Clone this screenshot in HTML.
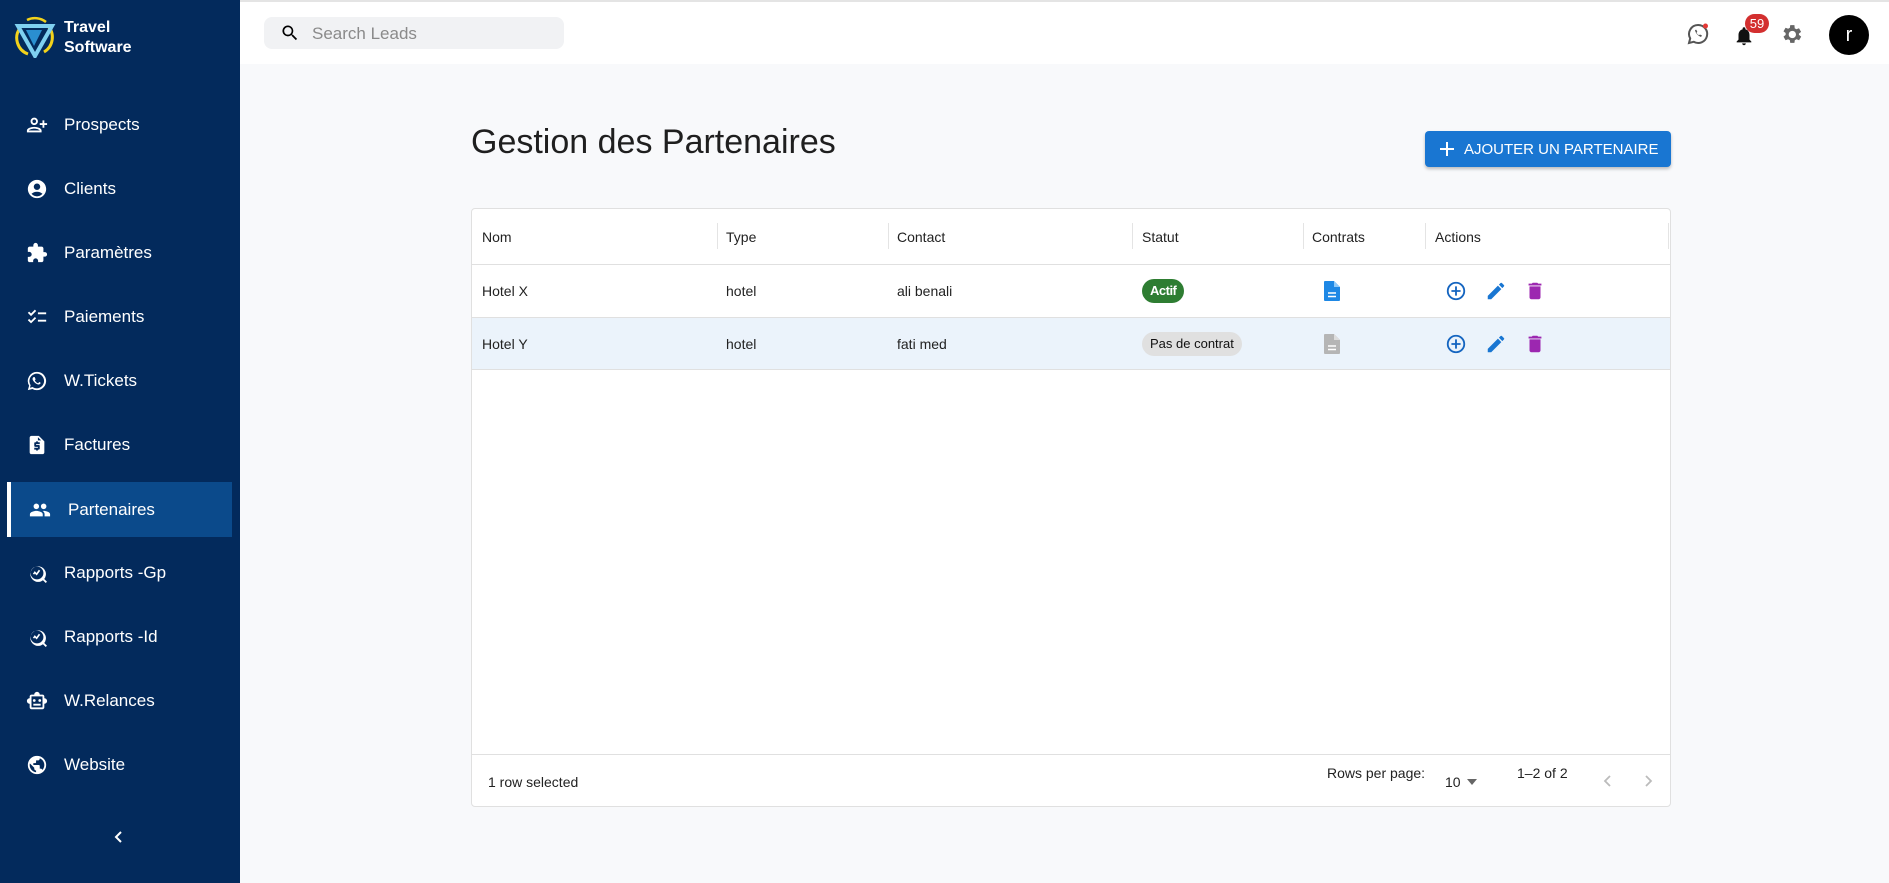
<!DOCTYPE html>
<html><head><meta charset="utf-8"><style>
*{box-sizing:border-box;margin:0;padding:0}
body{width:1889px;height:883px;overflow:hidden;font-family:"Liberation Sans",Arial,sans-serif;background:#f8f9fb;position:relative}
.side{position:absolute;left:0;top:0;width:240px;height:883px;background:#032a5c;color:#fff}
.logo{position:absolute;left:14px;top:16px}
.brand{position:absolute;left:64px;top:18px;font-weight:bold;font-size:16px;line-height:20px}
.item{position:absolute;left:0;width:240px;height:40px;display:flex;align-items:center;font-size:17px}
.item svg{position:absolute;left:26px;width:22px;height:22px;fill:#fff}
.item span{position:absolute;left:64px}
.active{left:7px;width:225px;height:55px;background:#0b4a8b;border-left:4px solid #fff}
.active svg{left:18px}.active span{left:57px}
.top{position:absolute;left:240px;top:0;right:0;height:64px;background:#fff;border-top:2px solid #e4e4e4}
.search{position:absolute;left:24px;top:15px;width:300px;height:32px;background:#f1f2f4;border-radius:8px}
.search span{position:absolute;left:48px;top:7px;font-size:17px;color:#8a8a8a}
h1{position:absolute;left:471px;top:123px;font-size:34px;font-weight:normal;color:#1f1f1f}
.btn{position:absolute;left:1425px;top:131px;width:246px;height:36px;background:#1976d2;border-radius:4px;color:#fff;font-size:15px;box-shadow:0 2px 3px rgba(0,0,0,.25);display:flex;align-items:center}
.tbl{position:absolute;left:471px;top:208px;width:1200px;height:599px;background:#fff;border:1px solid #e0e0e0;border-radius:4px;font-size:14px;color:#222}
.row{position:absolute;left:0;width:1198px;border-bottom:1px solid #e0e0e0}
.c{position:absolute;top:50%;transform:translateY(-50%)}
.sep{position:absolute;top:14px;height:26px;width:1px;background:#e4e4e4}
.chip{position:absolute;top:50%;transform:translateY(-50%);height:24px;border-radius:12px;padding:0 8px;line-height:24px;font-size:13px}
.ic{position:absolute;top:50%;transform:translateY(-50%)}
</style></head><body>
<div class="side">
<svg class="logo" width="42" height="42" viewBox="0 0 42 42"><path d="M6 12 A17 17 0 0 0 14 38" stroke="#f2d21b" stroke-width="3" fill="none"/><path d="M34 10 A17 17 0 0 1 30 36" stroke="#f2d21b" stroke-width="3" fill="none"/><path d="M13 4 A18 18 0 0 1 32 6" stroke="#f2d21b" stroke-width="2.5" fill="none"/><path d="M4 10 L38 10 L21 40 Z" fill="none" stroke="#7fd0f0" stroke-width="4"/><path d="M12 14 L28 14 L20 30 Z" fill="#2a8fd0"/></svg>
<div class="brand">Travel<br>Software</div>
<div class="item" style="top:105px"><svg viewBox="0 0 24 24"><path d="M15 12c2.2 0 4-1.8 4-4s-1.8-4-4-4-4 1.8-4 4 1.8 4 4 4zm0-6c1.1 0 2 .9 2 2s-.9 2-2 2-2-.9-2-2 .9-2 2-2zm0 8c-2.7 0-8 1.3-8 4v2h16v-2c0-2.7-5.3-4-8-4zm-6 4c.2-.7 3.3-2 6-2s5.8 1.3 6 2H9zM6 15v-3h3v-2H6V7H4v3H1v2h3v3z" transform="scale(-1,1) translate(-24,0)"/></svg><span>Prospects</span></div>
<div class="item" style="top:169px"><svg viewBox="0 0 24 24"><path d="M12 2C6.5 2 2 6.5 2 12s4.5 10 10 10 10-4.5 10-10S17.5 2 12 2zm0 4c1.9 0 3.5 1.6 3.5 3.5S13.9 13 12 13s-3.5-1.6-3.5-3.5S10.1 6 12 6zm0 14c-2 0-4.4-.8-6-2.8 1.6-1.3 3.7-2.2 6-2.2s4.4.9 6 2.2c-1.6 2-4 2.8-6 2.8z"/></svg><span>Clients</span></div>
<div class="item" style="top:233px"><svg viewBox="0 0 24 24"><path d="M20.5 11H19V7c0-1.1-.9-2-2-2h-4V3.5a2.5 2.5 0 0 0-5 0V5H4c-1.1 0-2 .9-2 2v3.8h1.5c1.5 0 2.7 1.2 2.7 2.7S5 16.2 3.5 16.2H2V20c0 1.1.9 2 2 2h3.8v-1.5c0-1.5 1.2-2.7 2.7-2.7s2.7 1.2 2.7 2.7V22H17c1.1 0 2-.9 2-2v-4h1.5a2.5 2.5 0 0 0 0-5z"/></svg><span>Paramètres</span></div>
<div class="item" style="top:297px"><svg viewBox="0 0 24 24"><path d="M22 7h-9v2h9V7zm0 8h-9v2h9v-2zM5.5 11 2 7.5l1.4-1.4 2.1 2.1 4.2-4.2 1.4 1.4-5.6 5.6zm0 8L2 15.5l1.4-1.4 2.1 2.1 4.2-4.2 1.4 1.4-5.6 5.6z"/></svg><span>Paiements</span></div>
<div class="item" style="top:361px"><svg viewBox="0 0 24 24"><path d="M12 2a10 10 0 0 0-8.6 15.1L2 22l5-1.3A10 10 0 1 0 12 2zm0 18c-1.6 0-3.1-.4-4.4-1.2l-.3-.2-3 .8.8-2.9-.2-.3A8 8 0 1 1 12 20zm4.4-6c-.2-.1-1.4-.7-1.7-.8-.2-.1-.4-.1-.5.1l-.8 1c-.1.2-.3.2-.5.1a6.5 6.5 0 0 1-3.2-2.8c-.2-.4.2-.4.7-1.3.1-.2 0-.3 0-.4l-.8-1.8c-.2-.5-.4-.4-.5-.4h-.5c-.2 0-.5.1-.7.3-.8.8-1 2-.4 3.1.8 1.5 2.3 3.5 4.900 4.4 1.5.5 2.4.3 3-.3.4-.4.5-.9.4-1.100-.1-.2-.2-.2-.4-.3z"/></svg><span>W.Tickets</span></div>
<div class="item" style="top:425px"><svg viewBox="0 0 24 24"><path d="M14 2H6c-1.1 0-2 .9-2 2v16c0 1.1.9 2 2 2h12c1.1 0 2-.9 2-2V8l-6-6zm1 9h-4v1h3c.6 0 1 .4 1 1v3c0 .6-.4 1-1 1h-1v1h-2v-1H9v-2h4v-1h-3c-.6 0-1-.4-1-1v-3c0-.6.4-1 1-1h1V8h2v1h2v2zm-2-4V3.5L16.5 7H13z"/></svg><span>Factures</span></div>
<div class="item active" style="top:482px"><svg viewBox="0 0 24 24"><path d="M16 11c1.7 0 3-1.3 3-3s-1.3-3-3-3-3 1.3-3 3 1.3 3 3 3zm-8 0c1.7 0 3-1.3 3-3S9.7 5 8 5 5 6.3 5 8s1.3 3 3 3zm0 2c-2.3 0-7 1.2-7 3.5V19h14v-2.5c0-2.3-4.7-3.5-7-3.5zm8 0c-.3 0-.6 0-1 .1 1.2.8 2 2 2 3.4V19h6v-2.5c0-2.3-4.7-3.5-7-3.5z"/></svg><span>Partenaires</span></div>
<div class="item" style="top:553px"><svg viewBox="0 0 24 24"><path d="M19.9 18.5A8.5 8.5 0 1 0 18.5 19.9l3 3 1.4-1.4-3-3zM12 19a7 7 0 1 1 0-14 7 7 0 0 1 0 14zm-4.5-6 2-3 2 2 2.5-3.5 1.5 1-3.8 5.2-2-2-.7 1-1.5-.7z"/></svg><span>Rapports -Gp</span></div>
<div class="item" style="top:617px"><svg viewBox="0 0 24 24"><path d="M19.9 18.5A8.5 8.5 0 1 0 18.5 19.9l3 3 1.4-1.4-3-3zM12 19a7 7 0 1 1 0-14 7 7 0 0 1 0 14zm-4.5-6 2-3 2 2 2.5-3.5 1.5 1-3.8 5.2-2-2-.7 1-1.5-.7z"/></svg><span>Rapports -Id</span></div>
<div class="item" style="top:681px"><svg viewBox="0 0 24 24"><path d="M20 9V7c0-1.1-.9-2-2-2h-3c0-1.7-1.3-3-3-3S9 3.3 9 5H6c-1.1 0-2 .9-2 2v2c-1.7 0-3 1.3-3 3s1.3 3 3 3v4c0 1.1.9 2 2 2h12c1.1 0 2-.9 2-2v-4c1.7 0 3-1.3 3-3s-1.3-3-3-3zm-2 10H6V7h12v12zm-9-6a1.5 1.5 0 1 0 0-3 1.5 1.5 0 0 0 0 3zm6 0a1.5 1.5 0 1 0 0-3 1.5 1.5 0 0 0 0 3zm-7 2h8v2H8z"/></svg><span>W.Relances</span></div>
<div class="item" style="top:745px"><svg viewBox="0 0 24 24"><path d="M12 2a10 10 0 1 0 0 20 10 10 0 0 0 0-20zm-1 17.9A8 8 0 0 1 4 12c0-.6.1-1.2.2-1.8L9 15v1c0 1.1.9 2 2 2v1.9zm6.9-2.5c-.3-.8-1-1.4-1.9-1.4h-1v-3c0-.6-.4-1-1-1H8v-2h2c.6 0 1-.4 1-1V7h2c1.1 0 2-.9 2-2v-.4a8 8 0 0 1 2.9 12.8z"/></svg><span>Website</span></div>
<svg style="position:absolute;left:113px;top:830px" width="12" height="14" viewBox="0 0 12 14"><path d="M8 2 3 7l5 5" stroke="#fff" stroke-width="2" fill="none"/></svg>
</div>
<div class="top">
<div class="search"><svg style="position:absolute;left:16px;top:6px" width="20" height="20" viewBox="0 0 24 24"><path d="M15.5 14h-.8l-.3-.3A6.5 6.5 0 1 0 9.5 16a6.5 6.5 0 0 0 4.2-1.6l.3.3v.8l5 5 1.5-1.5-5-5zm-6 0a4.5 4.5 0 1 1 0-9 4.5 4.5 0 0 1 0 9z"/></svg><span>Search Leads</span></div>
<svg style="position:absolute;left:1446px;top:20px" width="24" height="24" viewBox="0 0 24 24"><path d="M12 3a9 9 0 0 0-7.8 13.4L3 21l4.7-1.2A9 9 0 1 0 12 3z" stroke="#555" stroke-width="2" fill="none"/><path d="M9 8c.5 3 2.5 5.5 6 7l1-1.5-2-1-1 .8c-1-.5-2-1.5-2.5-2.5l.8-1-1-2z" fill="#555"/><circle cx="19.5" cy="4" r="2.5" fill="#e53935"/></svg>
<svg style="position:absolute;left:1493px;top:22px" width="22" height="24" viewBox="0 0 24 24"><path d="M12 22c1.1 0 2-.9 2-2h-4c0 1.1.9 2 2 2zm6-6v-5c0-3.1-1.6-5.6-4.5-6.3V4a1.5 1.5 0 0 0-3 0v.7C7.6 5.4 6 7.9 6 11v5l-2 2v1h16v-1l-2-2z" fill="#111"/></svg>
<div style="position:absolute;left:1505px;top:12px;width:24px;height:19px;border-radius:10px;background:#d32f2f;color:#fff;font-size:13px;text-align:center;line-height:19px">59</div>
<svg style="position:absolute;left:1539px;top:20px" width="25" height="25" viewBox="0 0 24 24"><path fill="#666" d="M19.1 12.9a7 7 0 0 0 0-1.8l2.1-1.6-2-3.5-2.5 1a7 7 0 0 0-1.6-.9L14.8 3h-4l-.4 2.6c-.6.2-1.1.5-1.6.9l-2.5-1-2 3.5 2.1 1.6a7 7 0 0 0 0 1.8l-2.1 1.6 2 3.5 2.5-1c.5.4 1 .7 1.6.9l.4 2.6h4l.4-2.6c.6-.2 1.1-.5 1.6-.9l2.5 1 2-3.5-2.1-1.6zM12.8 15.5a3.5 3.5 0 1 1 0-7 3.5 3.5 0 0 1 0 7z"/></svg>
<div style="position:absolute;left:1589px;top:13px;width:40px;height:40px;border-radius:50%;background:#000;color:#fff;font-size:20px;text-align:center;line-height:40px">r</div>
</div>
<h1>Gestion des Partenaires</h1>
<div class="btn"><svg style="position:absolute;left:15px;top:11px" width="14" height="14" viewBox="0 0 14 14"><path d="M7 0v14M0 7h14" stroke="#fff" stroke-width="2"/></svg><span style="position:absolute;left:39px">AJOUTER UN PARTENAIRE</span></div>
<div class="tbl">
<div class="row" style="top:0;height:56px">
<span class="c" style="left:10px">Nom</span><span class="c" style="left:254px">Type</span><span class="c" style="left:425px">Contact</span><span class="c" style="left:670px">Statut</span><span class="c" style="left:840px">Contrats</span><span class="c" style="left:963px">Actions</span>
<div class="sep" style="left:245px"></div><div class="sep" style="left:416px"></div><div class="sep" style="left:660px"></div><div class="sep" style="left:831px"></div><div class="sep" style="left:953px"></div><div class="sep" style="left:1196px"></div>
</div>
<div class="row" style="top:56px;height:53px">
<span class="c" style="left:10px">Hotel X</span><span class="c" style="left:254px">hotel</span><span class="c" style="left:425px">ali benali</span>
<span class="chip" style="left:670px;background:#2e7d32;color:#fff;font-weight:bold;letter-spacing:-0.5px">Actif</span>
<svg class="ic" style="left:850px" width="20" height="24" viewBox="0 0 20 24"><path d="M3 2h9l6 6v13a1 1 0 0 1-1 1H3a1 1 0 0 1-1-1V3a1 1 0 0 1 1-1z" fill="#1e88e5"/><path d="M12 2v6h6" fill="#90caf9"/><path d="M6 14h8M6 17.5h8" stroke="#fff" stroke-width="1.6"/></svg>
<svg class="ic" style="left:973px" width="22" height="22" viewBox="0 0 24 24"><circle cx="12" cy="12" r="9" stroke="#1565c0" stroke-width="2" fill="none"/><path d="M12 7v10M7 12h10" stroke="#1565c0" stroke-width="2"/></svg>
<svg class="ic" style="left:1013px" width="22" height="22" viewBox="0 0 24 24"><path fill="#1976d2" d="M3 17.3V21h3.8L17.8 9.9l-3.7-3.7L3 17.3zM20.7 7a1 1 0 0 0 0-1.4l-2.3-2.3a1 1 0 0 0-1.4 0l-1.8 1.8 3.7 3.7L20.7 7z"/></svg>
<svg class="ic" style="left:1052px" width="22" height="22" viewBox="0 0 24 24"><path fill="#9c27b0" d="M6 19c0 1.1.9 2 2 2h8c1.1 0 2-.9 2-2V7H6v12zM19 4h-3.5l-1-1h-5l-1 1H5v2h14V4z"/></svg>
</div>
<div class="row" style="top:109px;height:52px;background:#ebf3fb">
<span class="c" style="left:10px">Hotel Y</span><span class="c" style="left:254px">hotel</span><span class="c" style="left:425px">fati med</span>
<span class="chip" style="left:670px;background:#e0e0e0;color:#111">Pas de contrat</span>
<svg class="ic" style="left:850px" width="20" height="24" viewBox="0 0 20 24"><path d="M3 2h9l6 6v13a1 1 0 0 1-1 1H3a1 1 0 0 1-1-1V3a1 1 0 0 1 1-1z" fill="#b5b5b5"/><path d="M12 2v6h6" fill="#ddd"/><path d="M6 14h8M6 17.5h8" stroke="#fff" stroke-width="1.6"/></svg>
<svg class="ic" style="left:973px" width="22" height="22" viewBox="0 0 24 24"><circle cx="12" cy="12" r="9" stroke="#1565c0" stroke-width="2" fill="none"/><path d="M12 7v10M7 12h10" stroke="#1565c0" stroke-width="2"/></svg>
<svg class="ic" style="left:1013px" width="22" height="22" viewBox="0 0 24 24"><path fill="#1976d2" d="M3 17.3V21h3.8L17.8 9.9l-3.7-3.7L3 17.3zM20.7 7a1 1 0 0 0 0-1.4l-2.3-2.3a1 1 0 0 0-1.4 0l-1.8 1.8 3.7 3.7L20.7 7z"/></svg>
<svg class="ic" style="left:1052px" width="22" height="22" viewBox="0 0 24 24"><path fill="#9c27b0" d="M6 19c0 1.1.9 2 2 2h8c1.1 0 2-.9 2-2V7H6v12zM19 4h-3.5l-1-1h-5l-1 1H5v2h14V4z"/></svg>
</div>
<div style="position:absolute;left:0;top:545px;width:1198px;border-top:1px solid #e0e0e0"></div>
<span style="position:absolute;left:16px;top:565px">1 row selected</span>
<span style="position:absolute;left:855px;top:556px">Rows per page:</span>
<span style="position:absolute;left:973px;top:565px">10</span>
<svg style="position:absolute;left:994px;top:569px" width="12" height="8"><path d="M1 1h10L6 7z" fill="#666"/></svg>
<span style="position:absolute;left:1045px;top:556px">1–2 of 2</span>
<svg style="position:absolute;left:1130px;top:564px" width="12" height="16"><path d="M8 3 3 8l5 5" stroke="#bbb" stroke-width="1.8" fill="none"/></svg>
<svg style="position:absolute;left:1170px;top:564px" width="12" height="16"><path d="M4 3l5 5-5 5" stroke="#bbb" stroke-width="1.8" fill="none"/></svg>
</div>
</body></html>
